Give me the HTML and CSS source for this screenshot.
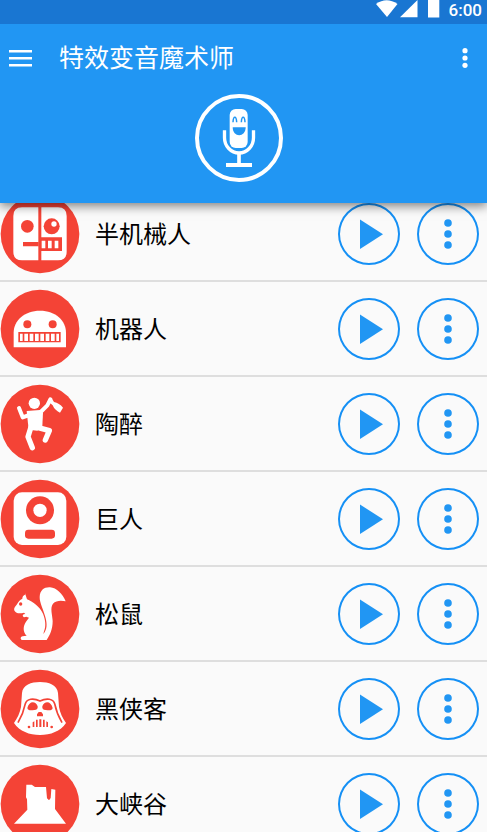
FILE: index.html
```html
<!DOCTYPE html>
<html lang="zh-CN">
<head>
<meta charset="utf-8">
<meta name="viewport" content="width=device-width, initial-scale=1">
<title>特效变音魔术师</title>
<link rel="stylesheet" href="styles.css">
</head>
<body>
<svg width="0" height="0" class="defs" aria-hidden="true">
  <symbol id="play" viewBox="0 0 62 62"><path d="M22 16.500V46L45 31.200z"/></symbol>
  <symbol id="dots" viewBox="0 0 62 62"><circle cx="31" cy="20" r="3.800"/><circle cx="31" cy="31" r="3.800"/><circle cx="31" cy="42" r="3.800"/></symbol>
</svg>
<header class="header">
  <div class="status">
    <svg class="status-icons" viewBox="376 0 64 24" aria-hidden="true">
      <path d="M376 4Q386.500 -3.500 397.500 4L387 17z"/>
      <path d="M417.500 0V17.300H400z"/>
      <path d="M431 -2h5v2h3.300v17.500H428V0h3z"/>
    </svg>
    <span class="time">6:00</span>
  </div>
  <div class="toolbar">
    <button class="tool menu" aria-label="菜单">
      <svg viewBox="0 0 23 17"><path d="M0 0h23v2.500H0zM0 7h23v2.500H0zM0 14h23v2.500H0z"/></svg>
    </button>
    <h1 class="title">特效变音魔术师</h1>
    <button class="tool more" aria-label="更多选项">
      <svg viewBox="0 0 6 20"><circle cx="3" cy="2.700" r="2.600"/><circle cx="3" cy="10" r="2.600"/><circle cx="3" cy="17.300" r="2.600"/></svg>
    </button>
  </div>
  <button class="mic" aria-label="录音">
    <svg viewBox="30 27 264 264">
      <circle cx="162" cy="159" r="126" fill="none" stroke="#fff" stroke-width="12"/>
      <rect x="134" y="72" width="54" height="117" rx="18" fill="#fff"/>
      <path d="M118.500 136v22a43.500 46 0 0 0 87 0v-22" fill="none" stroke="#fff" stroke-width="10"/>
      <path d="M162 204v34" stroke="#fff" stroke-width="11"/>
      <path d="M123 240h78" stroke="#fff" stroke-width="12"/>
      <path d="M144 112c1-20 10-20 11 0M169 112c1-20 10-20 11 0" fill="none" stroke="#2196f3" stroke-width="4.500"/>
      <path d="M143 127h39c0 32-39 32-39 0z" fill="#2196f3"/>
    </svg>
  </button>
</header>
<main class="content">
  <ul class="effects">
    <li class="effect">
      <svg class="avatar" viewBox="0 -4 240 240" aria-hidden="true">
        <circle cx="120" cy="116" r="118"/>
        <path class="w" d="M66 36h49v159H66q-26 0-26-26V62q0-26 26-26zM124 36h50q26 0 26 26v107q0 26-26 26h-50z"/>
        <circle cx="82" cy="93" r="19"/><circle cx="155" cy="93" r="24"/><circle class="w" cx="162" cy="86" r="8"/>
        <path d="M69 140h47v13H69zM118 126h68v41h-68z"/>
        <path class="w" d="M125 136h11v23h-11zM144 136h11v23h-11zM164 136h11v23h-11z"/>
      </svg>
      <span class="name">半机械人</span>
      <button class="action" aria-label="播放半机械人"><svg><use href="#play"/></svg></button>
      <button class="action" aria-label="半机械人选项"><svg><use href="#dots"/></svg></button>
    </li>
    <li class="effect">
      <svg class="avatar" viewBox="0 11 240 240" aria-hidden="true">
        <circle cx="120" cy="131" r="118"/>
        <path class="w" d="M41 186v-44C41 106 73 76 120 76s78 30 78 66v44z"/>
        <circle cx="82" cy="117" r="12"/><circle cx="158" cy="117" r="12"/>
        <path d="M55 140h127v31H55z"/>
        <path class="w" d="M60 145h8v22h-8zM73 145h11v22H73zM89 145h11v22H89zM105 145h11v22h-11zM121 145h11v22h-11zM137 145h11v22h-11zM153 145h11v22h-11zM169 145h8v22h-8z"/>
      </svg>
      <span class="name">机器人</span>
      <button class="action" aria-label="播放机器人"><svg><use href="#play"/></svg></button>
      <button class="action" aria-label="机器人选项"><svg><use href="#dots"/></svg></button>
    </li>
    <li class="effect">
      <svg class="avatar" viewBox="0 11 240 240" aria-hidden="true">
        <circle cx="120" cy="131" r="118"/>
        <circle class="w" cx="103" cy="69" r="17"/>
        <path class="w" d="M80 92l40-3 9 8-2 40-15 14-26-3z"/>
        <g fill="none" stroke="#fff" stroke-linecap="round" stroke-linejoin="round">
          <path stroke-width="12" d="M57 83l11 28 20-7M119 98l23-23 9-18"/>
          <path stroke-width="16" d="M93 140l-9 29 13 33M112 141l36 10-12 28"/>
        </g>
        <path class="w" d="M145 58l11-3 6 10q16 3 27 17l-9 15q-16-7-22-22l-9-8z"/>
      </svg>
      <span class="name">陶醉</span>
      <button class="action" aria-label="播放陶醉"><svg><use href="#play"/></svg></button>
      <button class="action" aria-label="陶醉选项"><svg><use href="#dots"/></svg></button>
    </li>
    <li class="effect">
      <svg class="avatar" viewBox="0 11 240 240" aria-hidden="true">
        <circle cx="120" cy="131" r="118"/>
        <rect class="w" x="41" y="51" width="158" height="158" rx="25"/>
        <circle cx="120" cy="105" r="42"/><circle class="w" cx="120" cy="105" r="20"/>
        <rect x="75" y="163" width="90" height="27" rx="10"/>
      </svg>
      <span class="name">巨人</span>
      <button class="action" aria-label="播放巨人"><svg><use href="#play"/></svg></button>
      <button class="action" aria-label="巨人选项"><svg><use href="#dots"/></svg></button>
    </li>
    <li class="effect">
      <svg class="avatar" viewBox="0 11 240 240" aria-hidden="true">
        <circle cx="120" cy="131" r="118"/>
        <path class="w" d="M75 69l6 18c17 6 39 23 48 43 7 18 10 37 3 53l-2 8c12-14 11-30 7-47-5-22-19-48-18-64 1-21 14-30 31-29 20 1 38 20 47 42-13-3-29-3-38 7-10 12-1 36-1 52 0 24-8 42-18 57H66c-5-1-6-9 2-11l12-2c-12-12-11-29-2-42l9-12-8-3-7 2c-5-3-5-6-1-9l5-1-4-4c-10 2-23 4-28-5-4-8 1-12 6-19 5-9 10-15 17-18 0-4 2-10 10-13z"/>
        <circle cx="62" cy="101" r="5"/>
      </svg>
      <span class="name">松鼠</span>
      <button class="action" aria-label="播放松鼠"><svg><use href="#play"/></svg></button>
      <button class="action" aria-label="松鼠选项"><svg><use href="#dots"/></svg></button>
    </li>
    <li class="effect">
      <svg class="avatar" viewBox="0 11 240 240" aria-hidden="true">
        <circle cx="120" cy="131" r="118"/>
        <path class="w" d="M66 83c2-24 28-33 54-33s52 9 54 33l3 42c3 18 11 33 21 48-17 25-46 36-78 36s-61-11-78-36c10-15 18-30 21-48z"/>
        <path fill="none" stroke="#f44336" stroke-width="5" d="M54 172c14-24 19-42 22-57 4-15 24-18 44-8 20-10 40-7 44 8 3 15 8 33 22 57"/>
        <path d="M82 128c5-22 25-22 31-5 1 7-2 11-10 11-10 1-19 3-21-6zM158 128c-5-22-25-22-31-5-1 7 2 11 10 11 10 1 19 3 21-6zM116 140h8l5 7v6h-18v-6z"/>
        <path d="M98 171l5-3v17h-5zM108 163h5v22h-5zM118 162h6v23h-6zM129 163h5v22h-5zM139 168l5 3v14h-5z"/>
        <circle cx="87" cy="185" r="4"/><circle cx="155" cy="185" r="4"/>
      </svg>
      <span class="name">黑侠客</span>
      <button class="action" aria-label="播放黑侠客"><svg><use href="#play"/></svg></button>
      <button class="action" aria-label="黑侠客选项"><svg><use href="#dots"/></svg></button>
    </li>
    <li class="effect">
      <svg class="avatar" viewBox="0 25 240 240" aria-hidden="true">
        <circle cx="120" cy="145" r="118"/>
        <path class="w" d="M42 204l40-42-1-31-3-6 1-38h16l10 7h33l3 34 6 6 5-7 2-27 12 2-1 58 33 44z"/>
      </svg>
      <span class="name">大峡谷</span>
      <button class="action" aria-label="播放大峡谷"><svg><use href="#play"/></svg></button>
      <button class="action" aria-label="大峡谷选项"><svg><use href="#dots"/></svg></button>
    </li>
  </ul>
</main>
</body>
</html>
```
FILE: styles.css
```css
* { box-sizing: border-box; }

body {
  margin: 0;
  height: 100vh;
  display: flex;
  flex-direction: column;
  overflow: hidden;
  background: #fafafa;
  color: #000;
  font-family: Roboto, "Noto Sans CJK SC", sans-serif;
}

button {
  padding: 0;
  border: 0;
  background: none;
  cursor: pointer;
}

svg { display: block; }

.defs { position: absolute; }

.header {
  position: relative;
  z-index: 1;
  flex: none;
  display: flex;
  flex-direction: column;
  padding-bottom: 21px;
  background: #2196f3;
  color: #fff;
  box-shadow: 0 3px 10px rgba(0, 0, 0, 0.5);
}

.status {
  display: flex;
  justify-content: flex-end;
  gap: 9px;
  height: 24px;
  padding-right: 5px;
  background: #1976d2;
}

.status-icons {
  width: 64px;
  height: 24px;
  fill: #fff;
}

.time {
  font-size: 17px;
  font-weight: 500;
  line-height: 20px;
}

.toolbar {
  display: flex;
  align-items: center;
  height: 68px;
  padding: 0 19px 0 9px;
}

.tool { fill: #fff; }

.menu svg {
  width: 23px;
  height: 17px;
}

.more svg {
  width: 6px;
  height: 20px;
}

.title {
  flex: 1;
  margin: 0 0 0 27px;
  padding-top: 2px;
  font-size: 25px;
  font-weight: 400;
  line-height: 36px;
}

.mic {
  align-self: center;
  margin: 2px 9px 0 0;
}

.mic svg {
  width: 88px;
  height: 88px;
}

.content {
  flex: 1;
  min-height: 0;
  overflow: hidden;
}

.effects {
  margin: -16px 0 0;
  padding: 0;
  list-style: none;
}

.effect {
  display: flex;
  align-items: center;
  gap: 17px;
  padding: 7px 8px 6px 0;
  border-bottom: 2px solid #dedede;
}

.avatar {
  flex: none;
  width: 80px;
  height: 80px;
  fill: #f44336;
}

.w { fill: #fff; }

.name {
  flex: 1;
  margin-left: -2px;
  padding-top: 2px;
  font-size: 24px;
  line-height: 36px;
}

.action {
  flex: none;
  width: 62px;
  height: 62px;
  border-radius: 50%;
  box-shadow: inset 0 0 0 2px #1590f5;
  fill: #2196f3;
}

.action svg {
  width: 62px;
  height: 62px;
}
```
